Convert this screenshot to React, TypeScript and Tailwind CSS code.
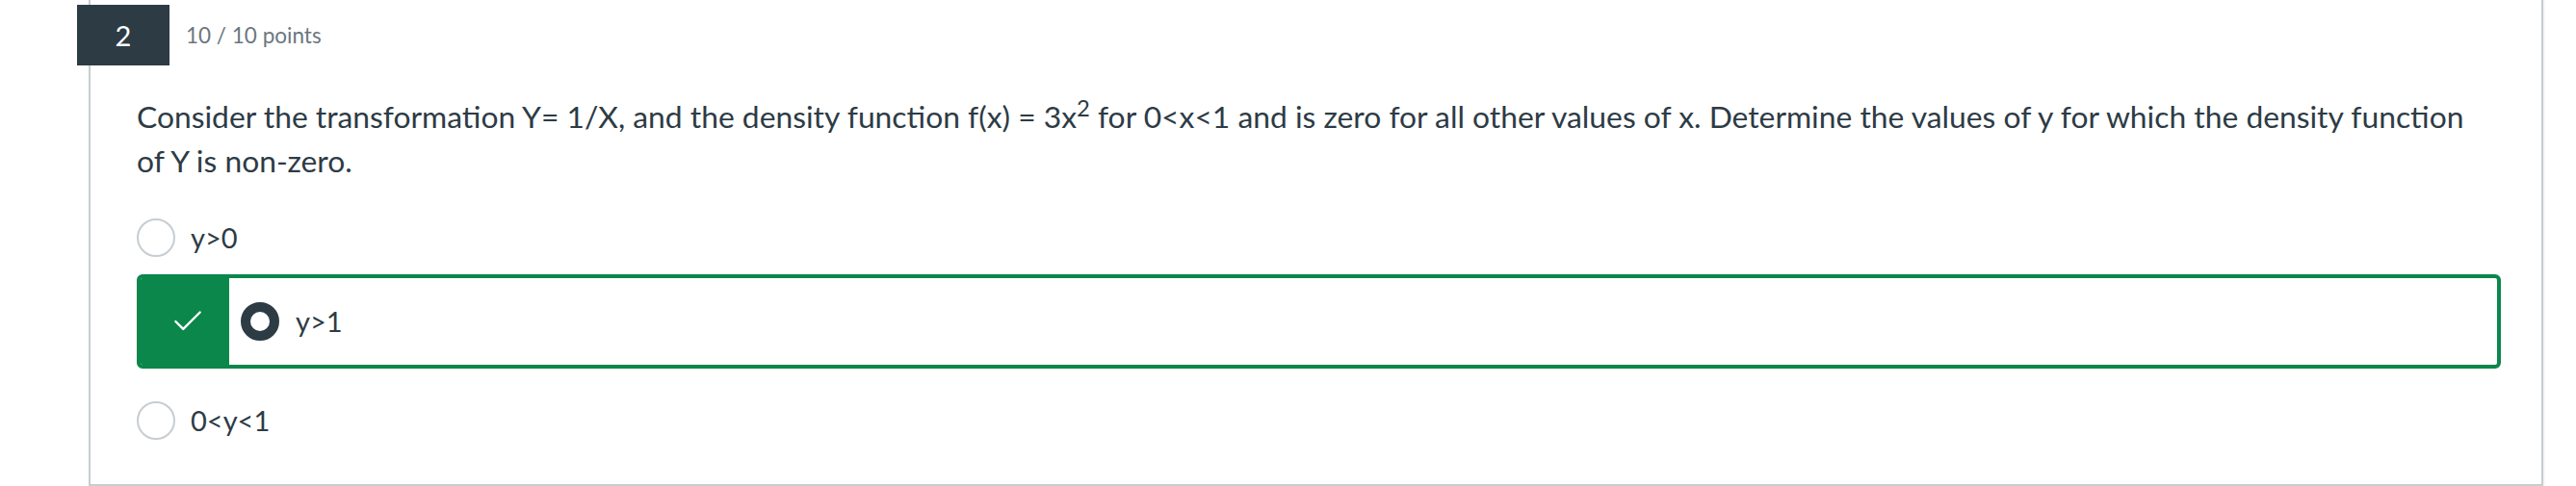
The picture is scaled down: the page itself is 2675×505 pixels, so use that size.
import { Check } from "lucide-react";

const font = { fontFamily: "Lato, 'Noto Sans', sans-serif" };

const Option = ({ label }: { label: string }) => (
  <div className="flex h-[60px] items-center gap-4">
    <span className="h-10 w-10 shrink-0 rounded-full border-2 border-[#c7cdd1] bg-white" />
    <span className="text-[29px] text-[#2d3b45]">{label}</span>
  </div>
);

export default function App() {
  return (
    <div className="min-h-[505px] bg-white pl-[92px] pr-[34px]" style={font}>
      <div className="relative border-x-2 border-b-2 border-[#c7cdd1] pb-[36px] shadow-[1px_0_2px_rgba(0,0,0,0.08)]">
        {/* header */}
        <div className="ml-[-14px] flex items-center gap-[17px] pt-[5px]">
          <div className="flex h-[63px] w-[96px] items-center justify-center bg-[#2d3b45] text-[29px] text-white">
            2
          </div>
          <span className="text-[22.5px] text-[#6b7780]">10 / 10 points</span>
        </div>

        <div className="pl-[48px] pr-[42px]">
          <p className="mr-[34px] mt-[30px] text-[31.8px] leading-[46px] text-[#2d3b45]">
            Consider the transformation Y= 1/X, and the density function f(x) = 3x<sup>2</sup> for 0&lt;x&lt;1 and is
            zero for all other values of x. Determine the values of y for which the density function of Y is non-zero.
          </p>

          <div className="mt-[27px]">
            <Option label="y>0" />
          </div>

          {/* correct answer */}
          <div className="mt-2 flex h-[98px] overflow-hidden rounded-md border-4 border-[#0b874b] bg-white">
            <div className="flex w-[92px] shrink-0 items-center justify-center bg-[#0b874b]">
              <Check className="ml-[6px] h-[38px] w-[38px] text-white" strokeWidth={1.5} />
            </div>
            <div className="flex items-center gap-[17px] pl-3">
              <span className="h-10 w-10 shrink-0 rounded-full border-[10px] border-[#2d3b45] bg-white" />
              <span className="text-[29px] text-[#2d3b45]">y&gt;1</span>
            </div>
          </div>

          <div className="mt-6">
            <Option label="0<y<1" />
          </div>
        </div>
      </div>
    </div>
  );
}
